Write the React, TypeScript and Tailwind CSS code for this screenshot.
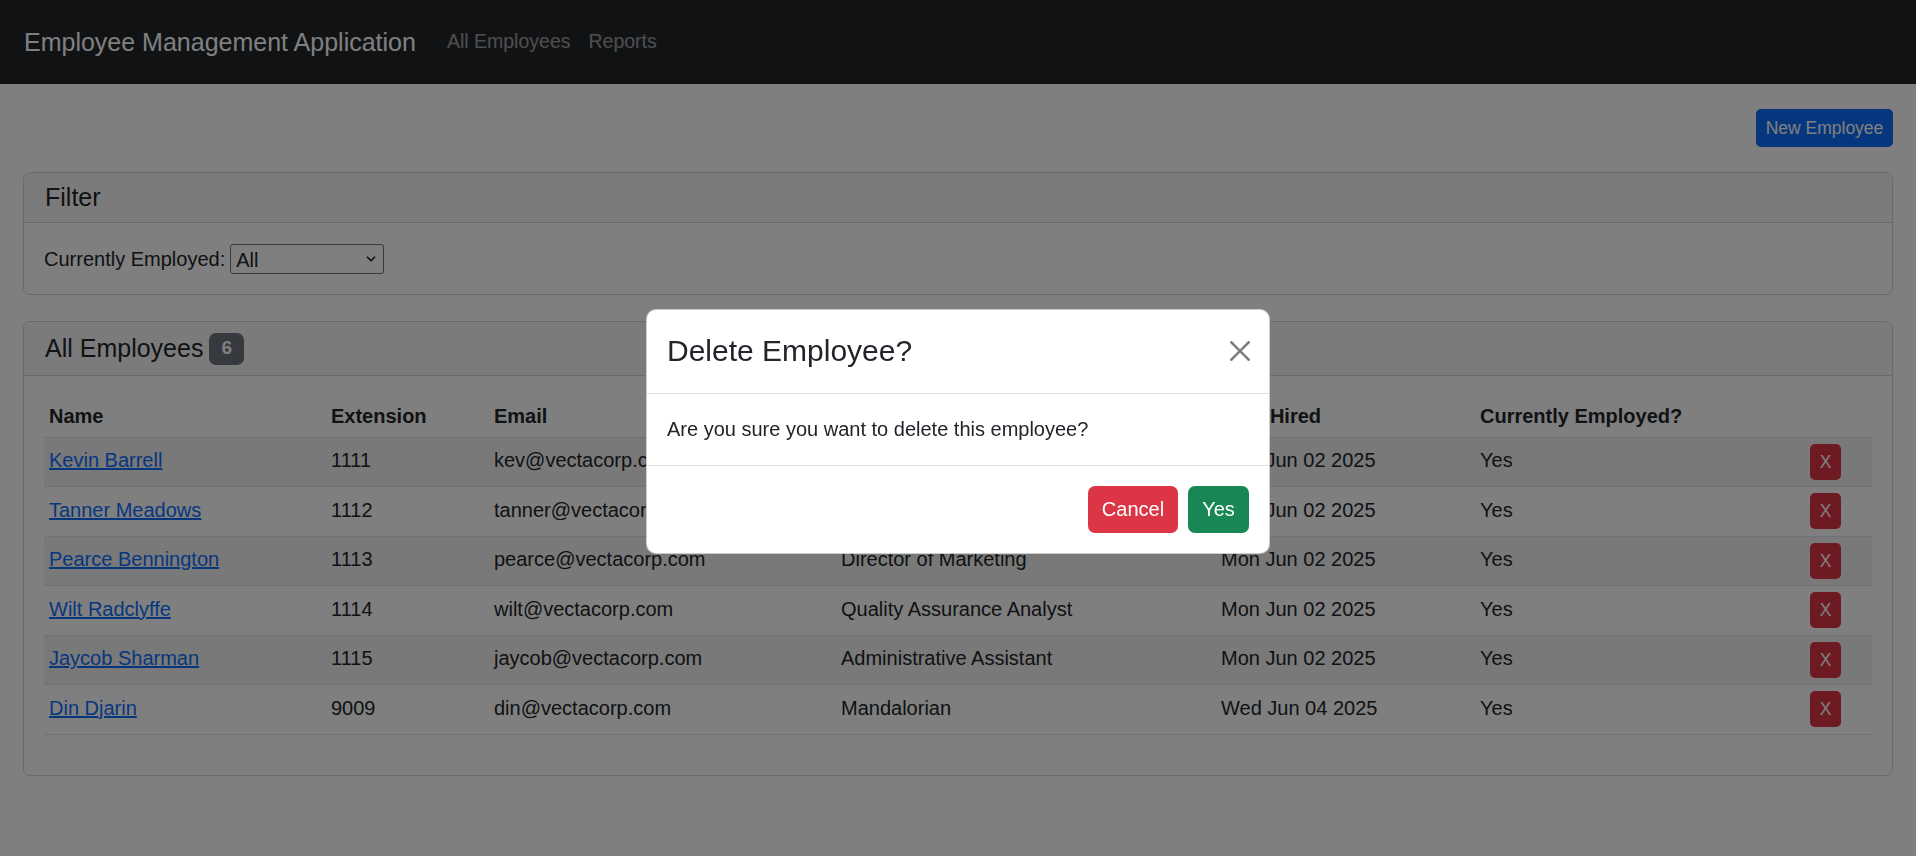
import { ChevronDown } from "lucide-react";

const employees = [
  { name: "Kevin Barrell", ext: "1111", email: "kev@vectacorp.com", title: "Chief Executive Officer", hired: "Mon Jun 02 2025" },
  { name: "Tanner Meadows", ext: "1112", email: "tanner@vectacorp.com", title: "Software Engineer", hired: "Mon Jun 02 2025" },
  { name: "Pearce Bennington", ext: "1113", email: "pearce@vectacorp.com", title: "Director of Marketing", hired: "Mon Jun 02 2025" },
  { name: "Wilt Radclyffe", ext: "1114", email: "wilt@vectacorp.com", title: "Quality Assurance Analyst", hired: "Mon Jun 02 2025" },
  { name: "Jaycob Sharman", ext: "1115", email: "jaycob@vectacorp.com", title: "Administrative Assistant", hired: "Mon Jun 02 2025" },
  { name: "Din Djarin", ext: "9009", email: "din@vectacorp.com", title: "Mandalorian", hired: "Wed Jun 04 2025" },
];

const font = { fontFamily: '"Liberation Sans", Arial, sans-serif' };

function Navbar() {
  return (
    <nav className="h-[84px] bg-[#212529] flex items-center px-[24px]">
      <span className="text-[25px] text-white leading-none">Employee Management Application</span>
      <div className="flex items-center gap-[18px] ml-[31px]">
        <a className="text-[19.5px] text-white/55">All Employees</a>
        <a className="text-[19.5px] text-white/55">Reports</a>
      </div>
    </nav>
  );
}

function Card({ header, children, bodyClass = "" }: { header: React.ReactNode; children: React.ReactNode; bodyClass?: string }) {
  return (
    <div className="border border-[#d3d4d5] rounded-[7px] overflow-hidden">
      <div className="bg-[#f7f7f7] border-b border-[#d3d4d5] px-[21px] flex items-center">{header}</div>
      <div className={`px-[20px] ${bodyClass}`}>{children}</div>
    </div>
  );
}

function DeleteModal() {
  return (
    <div className="fixed inset-0 z-50 flex items-center justify-center pt-[6px]">
      <div className="w-[624px] bg-white rounded-[10px] border border-black/20 text-[#212529]">
        <div className="h-[84px] px-[20px] flex items-center justify-between border-b border-[#dee2e6]">
          <h4 className="text-[30px] leading-none">Delete Employee?</h4>
          <button className="w-[30px] h-[30px] flex items-center justify-center opacity-50 mr-[-6px]">
            <svg width="20" height="20" viewBox="0 0 16 16" fill="#000">
              <path d="M.293.293a1 1 0 0 1 1.414 0L8 6.586 14.293.293a1 1 0 1 1 1.414 1.414L9.414 8l6.293 6.293a1 1 0 0 1-1.414 1.414L8 9.414l-6.293 6.293a1 1 0 0 1-1.414-1.414L6.586 8 .293 1.707a1 1 0 0 1 0-1.414" />
            </svg>
          </button>
        </div>
        <div className="h-[71px] px-[20px] flex items-center text-[20px]">Are you sure you want to delete this employee?</div>
        <div className="h-[88px] px-[20px] flex items-center justify-end gap-[10px] border-t border-[#dee2e6]">
          <button className="h-[47px] w-[90px] rounded-[7px] bg-[#dc3545] text-white text-[20px]">Cancel</button>
          <button className="h-[47px] w-[61px] rounded-[7px] bg-[#198754] text-white text-[20px]">Yes</button>
        </div>
      </div>
    </div>
  );
}

export default function App() {
  return (
    <div style={font} className="min-h-[856px] bg-white text-[#212529]">
      <Navbar />
      <main className="px-[23px]">
        <div className="flex justify-end mt-[25px]">
          <button className="h-[38px] w-[137px] rounded-[5px] bg-[#0d6efd] text-white text-[17.5px]">New Employee</button>
        </div>

        <div className="mt-[25px]">
          <Card header={<h5 className="text-[25px] h-[49px] flex items-center">Filter</h5>} bodyClass="h-[71px] flex items-center">
            <label className="text-[20px] mr-[5px]">Currently Employed:</label>
            <div className="relative">
              <select className="appearance-none w-[154px] h-[30px] border border-[#767676] rounded-[3px] pl-[5px] text-[20px] bg-white">
                <option>All</option>
                <option>Yes</option>
                <option>No</option>
              </select>
              <ChevronDown className="absolute right-[6px] top-[8px] w-[14px] h-[14px] pointer-events-none" strokeWidth={3} />
            </div>
          </Card>
        </div>

        <div className="mt-[26px]">
          <Card
            header={
              <h5 className="text-[25px] h-[53px] flex items-center">
                All Employees
                <span className="ml-[6px] inline-flex items-center justify-center w-[35px] h-[32px] rounded-[7px] bg-[#6c757d] text-white text-[19px] font-bold">6</span>
              </h5>
            }
            bodyClass="pt-[20px] pb-[40px]"
          >
            <table className="w-full table-fixed text-[20px] border-collapse">
              <colgroup>
                <col className="w-[282px]" />
                <col className="w-[163px]" />
                <col className="w-[347px]" />
                <col className="w-[380px]" />
                <col className="w-[259px]" />
                <col className="w-[330px]" />
                <col />
              </colgroup>
              <thead>
                <tr className="h-[41px] border-b border-[#dee2e6] text-left">
                  <th className="px-[5px] font-bold">Name</th>
                  <th className="px-[5px] font-bold">Extension</th>
                  <th className="px-[5px] font-bold">Email</th>
                  <th className="px-[5px] font-bold">Job Title</th>
                  <th className="px-[5px] font-bold">Date Hired</th>
                  <th className="px-[5px] font-bold">Currently Employed?</th>
                  <th></th>
                </tr>
              </thead>
              <tbody>
                {employees.map((e, i) => (
                  <tr key={e.ext} className={`h-[49.5px] border-b border-[#dee2e6] ${i % 2 === 0 ? "bg-[#f2f2f2]" : ""}`}>
                    <td className="px-[5px] pb-[3px]"><a className="text-[#0d6efd] underline">{e.name}</a></td>
                    <td className="px-[5px] pb-[3px]">{e.ext}</td>
                    <td className="px-[5px] pb-[3px]">{e.email}</td>
                    <td className="px-[5px] pb-[3px]">{e.title}</td>
                    <td className="px-[5px] pb-[3px]">{e.hired}</td>
                    <td className="px-[5px] pb-[3px]">Yes</td>
                    <td className="px-[5px]">
                      <button className="w-[31px] h-[36px] rounded-[5px] bg-[#dc3545] text-white text-[17.5px]">X</button>
                    </td>
                  </tr>
                ))}
              </tbody>
            </table>
          </Card>
        </div>
      </main>

      {/* modal backdrop */}
      <div className="fixed inset-0 z-40 bg-[rgba(0,0,0,0.5)]" />
      <DeleteModal />
    </div>
  );
}
